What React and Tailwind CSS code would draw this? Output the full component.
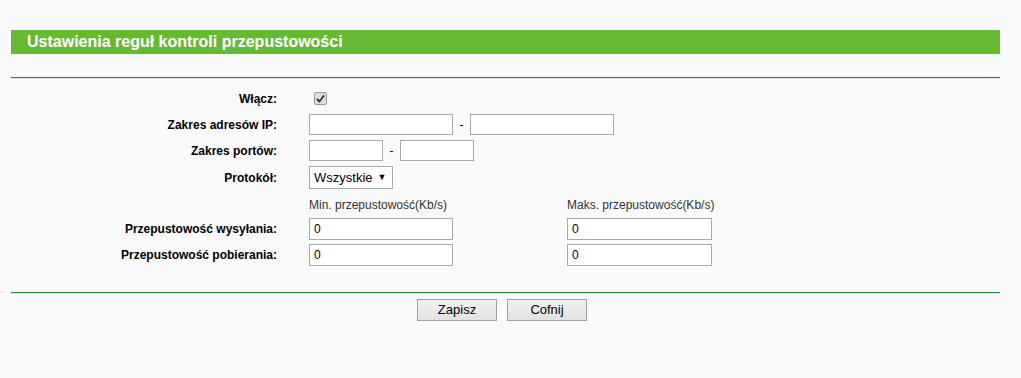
import React from "react";

const font = { fontFamily: '"Liberation Sans", Arial, sans-serif' };

function Label({ children }) {
  return (
    <div className="w-[266px] shrink-0 text-right text-[12px] font-bold text-black">
      {children}
    </div>
  );
}

function Input({ w, value = "" }) {
  return (
    <div
      className={`${w} h-[22px] bg-white border border-[#a9a9a9] flex items-center px-[4px] text-[12px] text-black`}
    >
      {value}
    </div>
  );
}

export default function App() {
  return (
    <div className="w-[1021px] h-[378px] bg-[#fafafa] overflow-hidden" style={font}>
      <div className="px-[11px] w-[1011px]">
        <div className="mt-[30px] h-[24px] bg-[#69b834] flex items-center pl-[16px] text-white font-bold text-[16px]">
          Ustawienia reguł kontroli przepustowości
        </div>
        <div className="mt-[23px] h-[1px] bg-[#1f8540]" />
        <div className="h-[1px] bg-[#dfe8e1]" />

        {/* Włącz */}
        <div className="mt-[7px] h-[25px] flex items-center">
          <Label>Włącz:</Label>
          <div className="ml-[37px] w-[13px] h-[13px] rounded-[2px] border border-[#9a9a9a] bg-[#dcdcdc] flex items-center justify-center">
            <svg width="9" height="9" viewBox="0 0 9 9">
              <path d="M1 5 L3.5 7.5 L8 1.5" stroke="#333" strokeWidth="1.8" fill="none" />
            </svg>
          </div>
        </div>

        {/* IP */}
        <div className="mt-[3px] h-[21px] flex items-center">
          <Label>Zakres adresów IP:</Label>
          <div className="ml-[32px] flex items-center">
            <div className="w-[144px] h-[21px] bg-white border border-[#a9a9a9]" />
            <span className="w-[17px] text-center text-[12px] text-black">-</span>
            <div className="w-[144px] h-[21px] bg-white border border-[#a9a9a9]" />
          </div>
        </div>

        {/* Ports */}
        <div className="mt-[5px] h-[21px] flex items-center">
          <Label>Zakres portów:</Label>
          <div className="ml-[32px] flex items-center">
            <div className="w-[74px] h-[21px] bg-white border border-[#a9a9a9]" />
            <span className="w-[17px] text-center text-[12px] text-black">-</span>
            <div className="w-[74px] h-[21px] bg-white border border-[#a9a9a9]" />
          </div>
        </div>

        {/* Protocol */}
        <div className="mt-[5px] h-[23px] flex items-center">
          <Label>Protokół:</Label>
          <div className="ml-[32px] w-[84px] h-[23px] bg-white border border-[#a9a9a9] flex items-center pl-[4px] text-[13px] text-black">
            <span>Wszystkie</span>
            <span className="ml-[5px] text-[9px]">▼</span>
          </div>
        </div>

        {/* Column headers */}
        <div className="h-[29px] flex items-start pt-[7px]">
          <div className="w-[266px] shrink-0" />
          <div className="ml-[32px] w-[258px] text-[12px] text-[#333]">Min. przepustowość(Kb/s)</div>
          <div className="text-[12px] text-[#333]">Maks. przepustowość(Kb/s)</div>
        </div>

        {/* Upload */}
        <div className="h-[22px] flex items-center">
          <Label>Przepustowość wysyłania:</Label>
          <div className="ml-[32px] w-[258px]">
            <Input w="w-[144px]" value="0" />
          </div>
          <Input w="w-[145px]" value="0" />
        </div>

        {/* Download */}
        <div className="mt-[4px] h-[22px] flex items-center">
          <Label>Przepustowość pobierania:</Label>
          <div className="ml-[32px] w-[258px]">
            <Input w="w-[144px]" value="0" />
          </div>
          <Input w="w-[145px]" value="0" />
        </div>

        <div className="mt-[26px] h-[1px] bg-[#1f8540]" />
        <div className="h-[1px] bg-[#dfe8e1]" />

        <div className="mt-[5px] flex justify-center gap-[10px] pr-[7px]">
          <button className="w-[80px] h-[22px] border border-[#a0a0a0] bg-gradient-to-b from-[#f2f2f2] to-[#e2e2e2] text-[13px] text-black">
            Zapisz
          </button>
          <button className="w-[80px] h-[22px] border border-[#a0a0a0] bg-gradient-to-b from-[#f2f2f2] to-[#e2e2e2] text-[13px] text-black">
            Cofnij
          </button>
        </div>
      </div>
    </div>
  );
}
